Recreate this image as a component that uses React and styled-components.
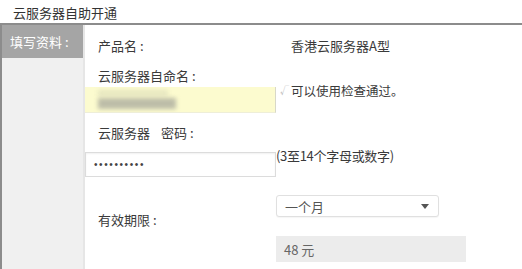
import React from "react";
import styled, { createGlobalStyle } from "styled-components";

const Global = createGlobalStyle`
  html, body { margin: 0; padding: 0; background: #fff; }
  body { font-family: "Noto Sans CJK SC", "Noto Sans", sans-serif; color: #333; }
  * { box-sizing: border-box; }
`;

const Page = styled.div`
  width: 522px;
  height: 269px;
  overflow: hidden;
  background: #fff;
`;

const TitleBar = styled.div`
  height: 23px;
  padding: 5px 0 0 13px;
  font-size: 13px;
  line-height: 16px;
  color: #333;
`;

const Body = styled.div`
  display: flex;
  border-top: 2px solid #8c8c8c;
  border-left: 2px solid #8c8c8c;
  height: 246px;
`;

const Sidebar = styled.div`
  width: 83px;
  background: #f0f0f0;
  border-right: 2px solid #e6e6e6;
`;

const SideLabel = styled.div`
  height: 33px;
  background: #a5a5a5;
  color: #fff;
  font-size: 13px;
  line-height: 33px;
  padding-left: 8px;
  white-space: pre;
`;

const Content = styled.div`
  flex: 1;
  display: grid;
  grid-template-columns: 191px 1fr;
  align-content: start;
`;

const Label = styled.div`
  height: ${(p) => p.$h}px;
  padding-left: 13px;
  display: flex;
  align-items: center;
  font-size: 13px;
  white-space: pre;
  color: #3a3a3a;
`;

const Gap = styled.span`
  display: inline-block;
  width: ${(p) => p.$w}px;
`;

const Value = styled.div`
  height: ${(p) => p.$h}px;
  margin-top: ${(p) => p.$mt || 0}px;
  padding-left: ${(p) => p.$pl || 0}px;
  display: flex;
  align-items: ${(p) => p.$align || "center"};
  font-size: 13px;
  white-space: nowrap;
  color: #3a3a3a;
`;

const NameInput = styled.div`
  height: 26px;
  margin-top: 2px;
  background: #fcfbcf;
  border-right: 1px solid #d8d8c8;
  border-bottom: 1px solid #eeeed8;
  position: relative;
  overflow: hidden;
`;

const Blur = styled.span`
  position: absolute;
  left: 13px;
  top: ${(p) => p.$top}px;
  width: ${(p) => p.$w}px;
  height: ${(p) => p.$hh}px;
  background: ${(p) => p.$c};
  filter: blur(2px);
`;

const Message = styled.span`
  margin-top: -4px;
  padding-left: 4px;
  display: flex;
  align-items: center;
  gap: 2px;
  font-size: 12.5px;
  line-height: 16px;
`;

const Tick = styled.span`
  font-size: 9px;
  color: #bbb;
`;

const PwdInput = styled.div`
  height: 25px;
  margin-top: 1px;
  background: #fff;
  border: 1px solid #dcdcdc;
  box-shadow: inset 0 1px 2px rgba(0, 0, 0, 0.06);
  display: flex;
  align-items: center;
  padding-left: 8px;
  font-family: "Liberation Sans", sans-serif;
  font-size: 10px;
  letter-spacing: 1.6px;
  color: #444;
`;

const Hint = styled.div`
  font-size: 13px;
  line-height: 16px;
  margin-top: -4px;
  letter-spacing: -0.3px;
`;

const Period = styled.div`
  display: flex;
  flex-direction: column;
  gap: 19px;
  margin-top: 18px;
`;

const Select = styled.div`
  width: 163px;
  height: 22px;
  border: 1px solid #e0e0e0;
  border-radius: 3px;
  background: #fff;
  display: flex;
  align-items: center;
  justify-content: space-between;
  padding: 0 9px 0 8px;
  font-size: 13px;
  color: #555;
  box-shadow: 0 1px 1px rgba(0, 0, 0, 0.04);
`;

const Caret = styled.span`
  width: 0;
  height: 0;
  border-left: 4px solid transparent;
  border-right: 4px solid transparent;
  border-top: 5px solid #555;
`;

const Price = styled.div`
  width: 190px;
  height: 26px;
  background: #ececec;
  display: flex;
  align-items: center;
  padding-left: 8px;
  font-size: 13px;
  color: #666;
`;

export default function App() {
  return (
    <Page>
      <Global />
      <TitleBar>云服务器自助开通</TitleBar>
      <Body>
        <Sidebar>
          <SideLabel>填写资料 :</SideLabel>
        </Sidebar>
        <Content>
          <Label $h={40}>产品名 :</Label>
          <Value $h={40} $pl={15}>香港云服务器A型</Value>

          <Label $h={20}>云服务器自命名 :</Label>
          <Value $h={20} />

          <NameInput>
            <Blur $top={3} $w={70} $hh={6} $c="#e6e6c0" />
            <Blur $top={11} $w={78} $hh={11} $c="#bdbda8" />
          </NameInput>
          <Value $h={26} $mt={2} $align="flex-start">
            <Message>
              <Tick>√</Tick>
              可以使用检查通过。
            </Message>
          </Value>

          <Label $h={38}>
            云服务器
            <Gap $w={11} />
            密码 :
          </Label>
          <Value $h={38} />

          <PwdInput>••••••••••</PwdInput>
          <Value $h={25} $mt={1} $align="flex-start">
            <Hint>(3至14个字母或数字)</Hint>
          </Value>

          <Label $h={85}>有效期限 :</Label>
          <Period>
            <Select>
              一个月
              <Caret />
            </Select>
            <Price>48 元</Price>
          </Period>
        </Content>
      </Body>
    </Page>
  );
}
